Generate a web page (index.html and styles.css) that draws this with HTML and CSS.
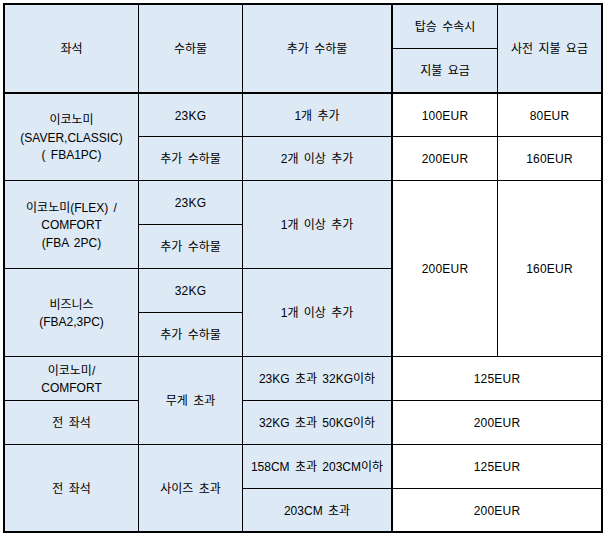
FILE: index.html
```html
<!DOCTYPE html>
<html lang="ko">
<head>
<meta charset="utf-8">
<title>수하물 요금</title>
<link rel="stylesheet" href="styles.css">
</head>
<body>
<table class="fees">
  <colgroup>
    <col class="c1"><col class="c2"><col class="c3"><col class="c4"><col class="c5">
  </colgroup>
  <tr class="h1">
    <td rowspan="2" class="hb">좌석</td>
    <td rowspan="2" class="hb">수하물</td>
    <td rowspan="2" class="hb sep">추가 수하물</td>
    <td>탑승 수속시</td>
    <td rowspan="2" class="hb last">사전 지불 요금</td>
  </tr>
  <tr class="h2">
    <td class="hb">지불 요금</td>
  </tr>
  <tr class="r1">
    <td rowspan="2" class="ml">이코노미<br>(SAVER,CLASSIC)<br>( FBA1PC)</td>
    <td class="num">23KG</td>
    <td class="sep">1개 추가</td>
    <td class="w num">100EUR</td>
    <td class="w last num">80EUR</td>
  </tr>
  <tr class="r">
    <td>추가 수하물</td>
    <td class="sep">2개 이상 추가</td>
    <td class="w num">200EUR</td>
    <td class="w last num">160EUR</td>
  </tr>
  <tr class="r">
    <td rowspan="2" class="ml">이코노미(FLEX) /<br>COMFORT<br>(FBA 2PC)</td>
    <td class="num">23KG</td>
    <td rowspan="2" class="sep">1개 이상 추가</td>
    <td rowspan="4" class="w num">200EUR</td>
    <td rowspan="4" class="w last num">160EUR</td>
  </tr>
  <tr class="r">
    <td>추가 수하물</td>
  </tr>
  <tr class="r">
    <td rowspan="2" class="ml">비즈니스<br>(FBA2,3PC)</td>
    <td class="num">32KG</td>
    <td rowspan="2" class="sep">1개 이상 추가</td>
  </tr>
  <tr class="r">
    <td>추가 수하물</td>
  </tr>
  <tr class="r">
    <td class="ml">이코노미/<br>COMFORT</td>
    <td rowspan="2">무게 초과</td>
    <td class="sep">23KG 초과 32KG이하</td>
    <td colspan="2" class="w last num">125EUR</td>
  </tr>
  <tr class="r">
    <td>전 좌석</td>
    <td class="sep">32KG 초과 50KG이하</td>
    <td colspan="2" class="w last num">200EUR</td>
  </tr>
  <tr class="r">
    <td rowspan="2" class="bot">전 좌석</td>
    <td rowspan="2" class="bot">사이즈 초과</td>
    <td class="sep">158CM 초과 203CM이하</td>
    <td colspan="2" class="w last num">125EUR</td>
  </tr>
  <tr class="rl">
    <td class="sep bot">203CM 초과</td>
    <td colspan="2" class="w last bot num">200EUR</td>
  </tr>
</table>
</body>
</html>
```

FILE: styles.css
```css
html, body {
  margin: 0;
  padding: 0;
  background: #ffffff;
}

body {
  padding: 3px;
}

.fees {
  table-layout: fixed;
  width: 600px;
  border-collapse: separate;
  border-spacing: 0;
  border: 2px solid #000;
  font-family: "Liberation Sans", "Noto Sans CJK KR", sans-serif;
  font-size: 12px;
  letter-spacing: 0;
  word-spacing: 2px;
  color: #000;
}

.c1 { width: 134px; }
.c2 { width: 104px; }
.c3 { width: 150px; }
.c4 { width: 105px; }
.c5 { width: 103px; }

.fees td {
  padding: 3px 0 0 0;
  text-align: center;
  vertical-align: middle;
  background: #dde9f5;
  border-right: 1px solid #000;
  border-bottom: 1px solid #000;
  line-height: 17.5px;
  box-sizing: border-box;
}

.fees td.num {
  font-family: "Liberation Sans Narrow", "Liberation Sans", "Noto Sans CJK KR", sans-serif;
  letter-spacing: 0.2px;
}

.fees td.w {
  background: #ffffff;
}

.fees td.last {
  border-right: 0;
}

.fees td.bot {
  border-bottom: 0;
}

.fees td.sep {
  border-right: 2px solid #000;
}

.fees td.hb {
  border-bottom: 2px solid #000;
}

.h1 { height: 44px; }
.h2 { height: 45px; }
.r1 { height: 43px; }
.r { height: 44px; }
.rl { height: 42px; }
```
